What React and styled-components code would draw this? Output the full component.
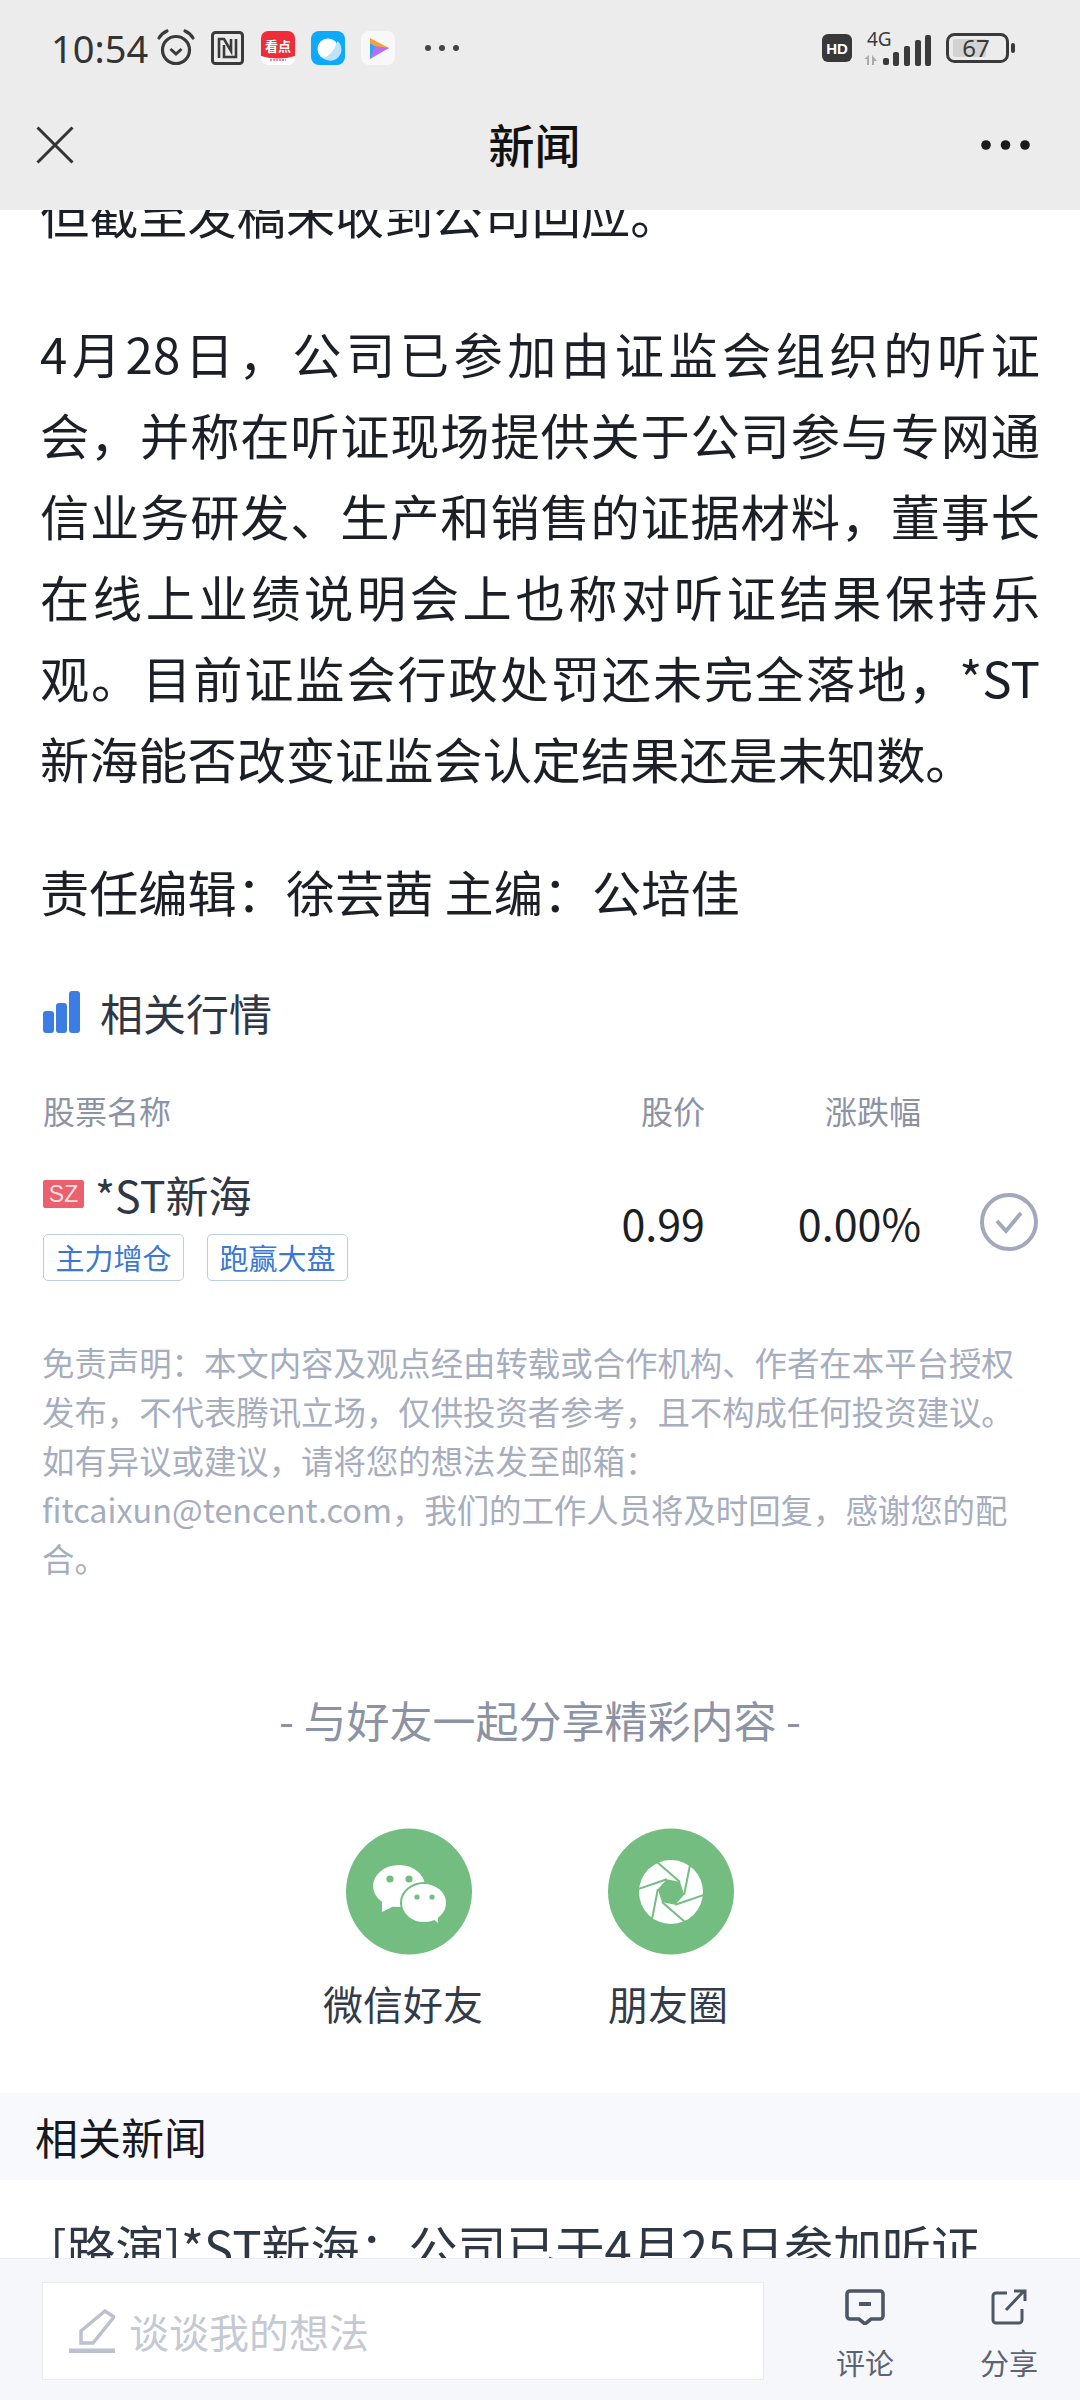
import styled, { createGlobalStyle } from 'styled-components'

const GlobalStyle = createGlobalStyle`
    html, body {
        margin: 0;
        padding: 0;
        background: #fff;
    }
    * {
        box-sizing: border-box;
    }
`

const Page = styled.div`
    width: 1080px;
    height: 2400px;
    display: flex;
    flex-flow: column;
    overflow: hidden;
    background: #fff;
    color: #1c1f26;
    font-family: "Noto Sans CJK SC", sans-serif;
`

const Header = styled.header`
    flex: none;
    height: 210px;
    background: #ececec;
`

const StatusBar = styled.div`
    height: 96px;
    padding-left: 51px;
    padding-right: 65px;
    display: flex;
    align-items: center;
    justify-content: space-between;
`

const StatusGroup = styled.div`
    display: flex;
    align-items: center;
`

const Time = styled.span`
    width: 106px;
    font-family: "Noto Sans", sans-serif;
    font-size: 38px;
    color: #333;
`

const StatusIcon = styled.svg`
    display: block;
    flex: none;
    overflow: visible;
    margin-right: ${(p) => p.$gap ?? 16}px;
`

const NavBar = styled.div`
    height: 98px;
    padding-left: 36px;
    padding-right: 50px;
    display: flex;
    align-items: center;
    justify-content: space-between;
`

const NavTitle = styled.h1`
    margin: 0;
    flex: 1;
    padding-left: 14px;
    padding-bottom: 5px;
    text-align: center;
    font-size: 46px;
    font-weight: 500;
    color: #111;
`

const Content = styled.main`
    flex: 1;
    min-height: 0;
    overflow: hidden;
`

const Article = styled.div`
    padding: 0 40px;
`

const Para = styled.p`
    margin: 0 0 52px;
    font-size: 49.2px;
    line-height: 81px;
    text-align: justify;
    color: #1c1f26;

    &:first-child {
        margin-top: -38px;
        margin-bottom: 59px;
    }
`

const SectionTitle = styled.div`
    margin-top: -1px;
    display: flex;
    align-items: center;
    gap: 20px;
    padding-left: 3px;
    font-size: 43px;
    line-height: 60px;
    color: #2f3745;
`

const Quote = styled.section`
    padding: 0 42px 0 40px;
`

const QuoteGrid = styled.div`
    display: grid;
    grid-template-columns: 1fr 120px 216px 117px;
    align-items: center;
`

const HeadCell = styled.div`
    margin-top: 44px;
    padding-left: ${(p) => (p.$first ? 3 : 0)}px;
    text-align: ${(p) => (p.$first ? 'left' : 'right')};
    font-size: 32px;
    line-height: 48px;
    color: #8b93a4;
`

const StockCell = styled.div`
    margin-top: 32px;
    padding-left: 3px;
`

const StockName = styled.div`
    display: flex;
    align-items: center;
    gap: 11px;
    font-size: 43px;
    line-height: 56px;
    color: #2f3745;
`

const MarketBadge = styled.span`
    width: 41px;
    height: 28px;
    border-radius: 2px;
    background: #ec5f6c;
    color: #fbdfe2;
    font-family: "Liberation Sans", sans-serif;
    font-size: 23px;
    line-height: 28px;
    text-align: center;
`

const Tags = styled.div`
    margin-top: 12px;
    display: flex;
    gap: 23px;
`

const Tag = styled.span`
    width: 141px;
    height: 47px;
    border: 1px solid #b9cde6;
    border-radius: 5px;
    color: #3a78d4;
    font-size: 29px;
    line-height: 45px;
    text-align: center;
`

const Num = styled.div`
    margin-top: 28px;
    text-align: right;
    font-size: 43px;
    color: #1c1f26;
`

const CheckCell = styled.div`
    margin-top: 28px;
    display: flex;
    justify-content: flex-end;
`

const Disclaimer = styled.p`
    margin: 56px 0 0;
    padding: 0 40px 0 42px;
    font-size: 32.4px;
    line-height: 49px;
    color: #a5adbe;
`

const ShareTitle = styled.div`
    margin-top: 107px;
    text-align: center;
    font-size: 43px;
    line-height: 60px;
    color: #8b93a4;
`

const ShareRow = styled.div`
    margin-top: 79px;
    padding-left: 323px;
    display: flex;
`

const ShareItem = styled.div`
    width: ${(p) => p.$w}px;
    display: flex;
    flex-flow: column;
    align-items: flex-start;
    font-size: 40px;
    line-height: 56px;
    color: #333b4b;
`

const ShareCircle = styled.svg`
    display: block;
    margin-left: ${(p) => p.$offset}px;
    margin-bottom: 20px;
`

const RelatedHead = styled.div`
    margin-top: 62px;
    height: 87px;
    padding-left: 35px;
    background: #f8f9fc;
    font-size: 43px;
    line-height: 87px;
    color: #16191f;
`

const RelatedItem = styled.div`
    margin-top: 25px;
    padding-left: 50px;
    font-size: 49px;
    line-height: 81px;
    white-space: nowrap;
    color: #2f3745;
`

const Footer = styled.footer`
    flex: none;
    height: 142px;
    padding-top: 23px;
    padding-left: 42px;
    display: flex;
    background: #f6f7fa;
    border-top: 1px solid #eceef2;
`

const InputBox = styled.div`
    width: 722px;
    height: 98px;
    padding-left: 26px;
    display: flex;
    align-items: center;
    gap: 14px;
    background: #fff;
    border: 1px solid #e9ebef;
    font-size: 40px;
    color: #c5c9d3;
`

const FooterAction = styled.div`
    width: ${(p) => p.$w}px;
    margin-left: ${(p) => p.$left}px;
    margin-top: 7px;
    display: flex;
    flex-flow: column;
    align-items: center;
    gap: 18px;
    font-size: 29px;
    line-height: 38px;
    color: #5c6373;
`

function Aperture() {
    const blades = [0, 60, 120, 180, 240, 300]
    const hub = blades
        .map((a) => {
            const rad = ((a - 48) * Math.PI) / 180
            return `${63 + 13.5 * Math.cos(rad)},${64 + 13.5 * Math.sin(rad)}`
        })
        .join(' ')
    return (
        <ShareCircle width="126" height="127" viewBox="0 0 126 127" $offset={0}>
            <circle cx="63" cy="63.5" r="63" fill="#72bd7f" />
            <circle cx="63" cy="64" r="32" fill="#fff" />
            <g stroke="#72bd7f" strokeWidth="2">
                {blades.map((a) => (
                    <line key={a} x1="72" y1="54" x2="49" y2="34" transform={`rotate(${a} 63 64)`} />
                ))}
            </g>
            <polygon points={hub} fill="#72bd7f" />
        </ShareCircle>
    )
}

export default function App() {
    return (
        <Page>
            <GlobalStyle />
            <Header>
                <StatusBar>
                    <StatusGroup>
                        <Time>10:54</Time>
                        <StatusIcon width="38" height="38" viewBox="0 0 38 38" fill="none" stroke="#3a3a3a" $gap={16}>
                            <circle cx="19" cy="21" r="13.5" strokeWidth="3.2" />
                            <path d="M13.5 20 L19 25 L24.5 20" strokeWidth="3" />
                            <path d="M2 9 Q5 4 10 2 M36 9 Q33 4 28 2" strokeWidth="3.2" strokeLinecap="round" />
                        </StatusIcon>
                        <StatusIcon width="33" height="34" viewBox="0 0 33 34" fill="none" stroke="#3a3a3a" $gap={17}>
                            <rect x="1.5" y="1.5" width="30" height="31" rx="3" strokeWidth="3" />
                            <path d="M8 27 V8 L13 8 L20 20 V8 M13 14 V26 H25 V8" strokeWidth="2.6" />
                        </StatusIcon>
                        <StatusIcon width="34" height="34" viewBox="0 0 34 34" $gap={16}>
                            <rect width="34" height="34" rx="7" fill="#fff" />
                            <path d="M0 7 a7 7 0 0 1 7 -7 h20 a7 7 0 0 1 7 7 v18 q-17 5 -34 0 z" fill="#ee2c3a" />
                            <text x="17" y="20" textAnchor="middle" fontSize="13" fontWeight="700" fill="#fff">看点</text>
                            <path d="M9 29 h16" stroke="#e58" strokeWidth="1.6" strokeDasharray="2 1" />
                        </StatusIcon>
                        <StatusIcon width="34" height="34" viewBox="0 0 34 34" $gap={16}>
                            <rect width="34" height="34" rx="8" fill="#0fa9fb" />
                            <circle cx="17" cy="18" r="10.5" fill="#fff" />
                            <path d="M26.5 10 A10.5 10.5 0 0 1 12 27 Q22 24 26.5 10 z" fill="#bfe3fb" />
                        </StatusIcon>
                        <StatusIcon width="34" height="34" viewBox="0 0 34 34" $gap={30}>
                            <rect width="34" height="34" rx="8" fill="#f8f8f8" />
                            <path d="M9 7 L28 17 L22 20 L9 12 z" fill="#f5a13a" />
                            <path d="M9 12 L14 15 V24 L9 28 z" fill="#29a8f0" />
                            <path d="M14 15 L28 17 L9 28 z" fill="#b56ff0" />
                        </StatusIcon>
                        <StatusIcon width="34" height="8" viewBox="0 0 34 8" fill="#444" $gap={0}>
                            <circle cx="3" cy="4" r="3" />
                            <circle cx="17" cy="4" r="3" />
                            <circle cx="31" cy="4" r="3" />
                        </StatusIcon>
                    </StatusGroup>
                    <StatusGroup>
                        <StatusIcon width="30" height="28" viewBox="0 0 30 28" $gap={12}>
                            <rect width="30" height="28" rx="6" fill="#383838" />
                            <text x="15" y="20" textAnchor="middle" fontSize="15" fontWeight="700" fontFamily="Liberation Sans" fill="#fff">HD</text>
                        </StatusIcon>
                        <StatusIcon width="68" height="38" viewBox="0 0 68 38" $gap={14}>
                            <text x="3" y="17" fontSize="19" fontFamily="Noto Sans" fill="#3a3a3a">4G</text>
                            <path d="M5 26 v10 h-2 v-6 h-3 z M8 36 v-10 l5 6 h-3 v4 z" fill="#aaa" />
                            <rect x="19" y="29" width="6" height="7" rx="2" fill="#3a3a3a" />
                            <rect x="29" y="23" width="6" height="14" rx="2" fill="#3a3a3a" />
                            <rect x="40" y="17" width="6" height="20" rx="2" fill="#3a3a3a" />
                            <rect x="51" y="11" width="6" height="26" rx="2" fill="#3a3a3a" />
                            <rect x="61" y="6" width="6" height="31" rx="2" fill="#3a3a3a" />
                        </StatusIcon>
                        <StatusIcon width="69" height="30" viewBox="0 0 69 30" $gap={0}>
                            <rect x="1.5" y="1.5" width="60" height="27" rx="7" fill="none" stroke="#3a3a3a" strokeWidth="3" />
                            <rect x="7" y="6" width="33" height="18" rx="2" fill="#d2d2d2" />
                            <rect x="65" y="10" width="4" height="10" rx="2" fill="#3a3a3a" />
                            <text x="30" y="24" textAnchor="middle" fontSize="24" fontFamily="Noto Sans" fill="#3a3a3a">67</text>
                        </StatusIcon>
                    </StatusGroup>
                </StatusBar>
                <NavBar>
                    <StatusIcon width="38" height="38" viewBox="0 0 38 38" fill="none" stroke="#333" $gap={0}>
                        <path d="M1.5 1.5 L36.5 36.5 M36.5 1.5 L1.5 36.5" strokeWidth="3" />
                    </StatusIcon>
                    <NavTitle>新闻</NavTitle>
                    <StatusIcon width="49" height="10" viewBox="0 0 49 10" fill="#1a1a1a" $gap={0}>
                        <circle cx="5" cy="5" r="4.8" />
                        <circle cx="24.5" cy="5" r="4.8" />
                        <circle cx="44" cy="5" r="4.8" />
                    </StatusIcon>
                </NavBar>
            </Header>
            <Content>
                <Article>
                    <Para>但截至发稿未收到公司回应。</Para>
                    <Para>4月28日，公司已参加由证监会组织的听证会，并称在听证现场提供关于公司参与专网通信业务研发、生产和销售的证据材料，董事长在线上业绩说明会上也称对听证结果保持乐观。目前证监会行政处罚还未完全落地，*ST新海能否改变证监会认定结果还是未知数。</Para>
                    <Para>责任编辑：徐芸茜 主编：公培佳</Para>
                </Article>
                <Quote>
                    <SectionTitle>
                        <svg width="37" height="42" viewBox="0 0 37 42" fill="#3b7de3">
                            <rect x="0" y="20" width="11" height="22" rx="3" />
                            <rect x="13" y="12" width="11" height="30" rx="3" />
                            <rect x="26" y="0" width="11" height="42" rx="3" />
                        </svg>
                        相关行情
                    </SectionTitle>
                    <QuoteGrid>
                        <HeadCell $first>股票名称</HeadCell>
                        <HeadCell>股价</HeadCell>
                        <HeadCell>涨跌幅</HeadCell>
                        <div />
                        <StockCell>
                            <StockName>
                                <MarketBadge>SZ</MarketBadge>
                                *ST新海
                            </StockName>
                            <Tags>
                                <Tag>主力增仓</Tag>
                                <Tag>跑赢大盘</Tag>
                            </Tags>
                        </StockCell>
                        <Num>0.99</Num>
                        <Num>0.00%</Num>
                        <CheckCell>
                            <svg width="58" height="58" viewBox="0 0 58 58" fill="none" stroke="#a3a9bd" strokeWidth="4">
                                <circle cx="29" cy="29" r="27" />
                                <path d="M17 28 L26 38 L41 20" />
                            </svg>
                        </CheckCell>
                    </QuoteGrid>
                </Quote>
                <Disclaimer>
                    免责声明：本文内容及观点经由转载或合作机构、作者在本平台授权发布，不代表腾讯立场，仅供投资者参考，且不构成任何投资建议。
                    <br />
                    如有异议或建议，请将您的想法发至邮箱：
                    <br />
                    fitcaixun@tencent.com，我们的工作人员将及时回复，感谢您的配合。
                </Disclaimer>
                <ShareTitle>- 与好友一起分享精彩内容 -</ShareTitle>
                <ShareRow>
                    <ShareItem $w={285}>
                        <ShareCircle width="126" height="127" viewBox="0 0 126 127" $offset={23}>
                            <circle cx="63" cy="63.5" r="63" fill="#72bd7f" />
                            <ellipse cx="53" cy="58" rx="26" ry="21" fill="#fff" />
                            <path d="M36 72 L36 84 L50 77 z" fill="#fff" />
                            <ellipse cx="78" cy="75" rx="23" ry="20" fill="#fff" stroke="#72bd7f" strokeWidth="2" />
                            <path d="M86 90 L92 95 L92 86 z" fill="#fff" />
                            <g fill="#72bd7f">
                                <circle cx="44" cy="51" r="3.6" />
                                <circle cx="63" cy="51" r="3.6" />
                                <circle cx="71" cy="69" r="2.6" />
                                <circle cx="86" cy="69" r="2.6" />
                            </g>
                        </ShareCircle>
                        微信好友
                    </ShareItem>
                    <ShareItem $w={200}>
                        <Aperture />
                        朋友圈
                    </ShareItem>
                </ShareRow>
                <RelatedHead>相关新闻</RelatedHead>
                <RelatedItem>[路演]*ST新海：公司已于4月25日参加听证</RelatedItem>
            </Content>
            <Footer>
                <InputBox>
                    <svg width="46" height="44" viewBox="0 0 46 44" fill="none" stroke="#bcc1cd">
                        <path d="M12 34 V22 L36 2 L45 8 L24 34 z" strokeWidth="3.5" />
                        <path d="M0 42 H46" strokeWidth="5" />
                    </svg>
                    谈谈我的想法
                </InputBox>
                <FooterAction $w={60} $left={71}>
                    <svg width="40" height="36" viewBox="0 0 40 36" fill="none" stroke="#4f5666">
                        <path d="M5 2 H35 a3 3 0 0 1 3 3 V27 a3 3 0 0 1 -3 3 H26 L20 35 L14 30 H5 a3 3 0 0 1 -3 -3 V5 a3 3 0 0 1 3 -3 z" strokeWidth="3.6" />
                        <path d="M14 15 H26" strokeWidth="4" />
                    </svg>
                    评论
                </FooterAction>
                <FooterAction $w={60} $left={84}>
                    <svg width="36" height="36" viewBox="0 0 36 36" fill="none" stroke="#4f5666">
                        <path d="M16 4 H5 a3 3 0 0 0 -3 3 V31 a3 3 0 0 0 3 3 H28 a3 3 0 0 0 3 -3 V20" strokeWidth="3" />
                        <path d="M15 21 L32 3 M23 2 H34 V12" strokeWidth="3" />
                    </svg>
                    分享
                </FooterAction>
            </Footer>
        </Page>
    )
}
